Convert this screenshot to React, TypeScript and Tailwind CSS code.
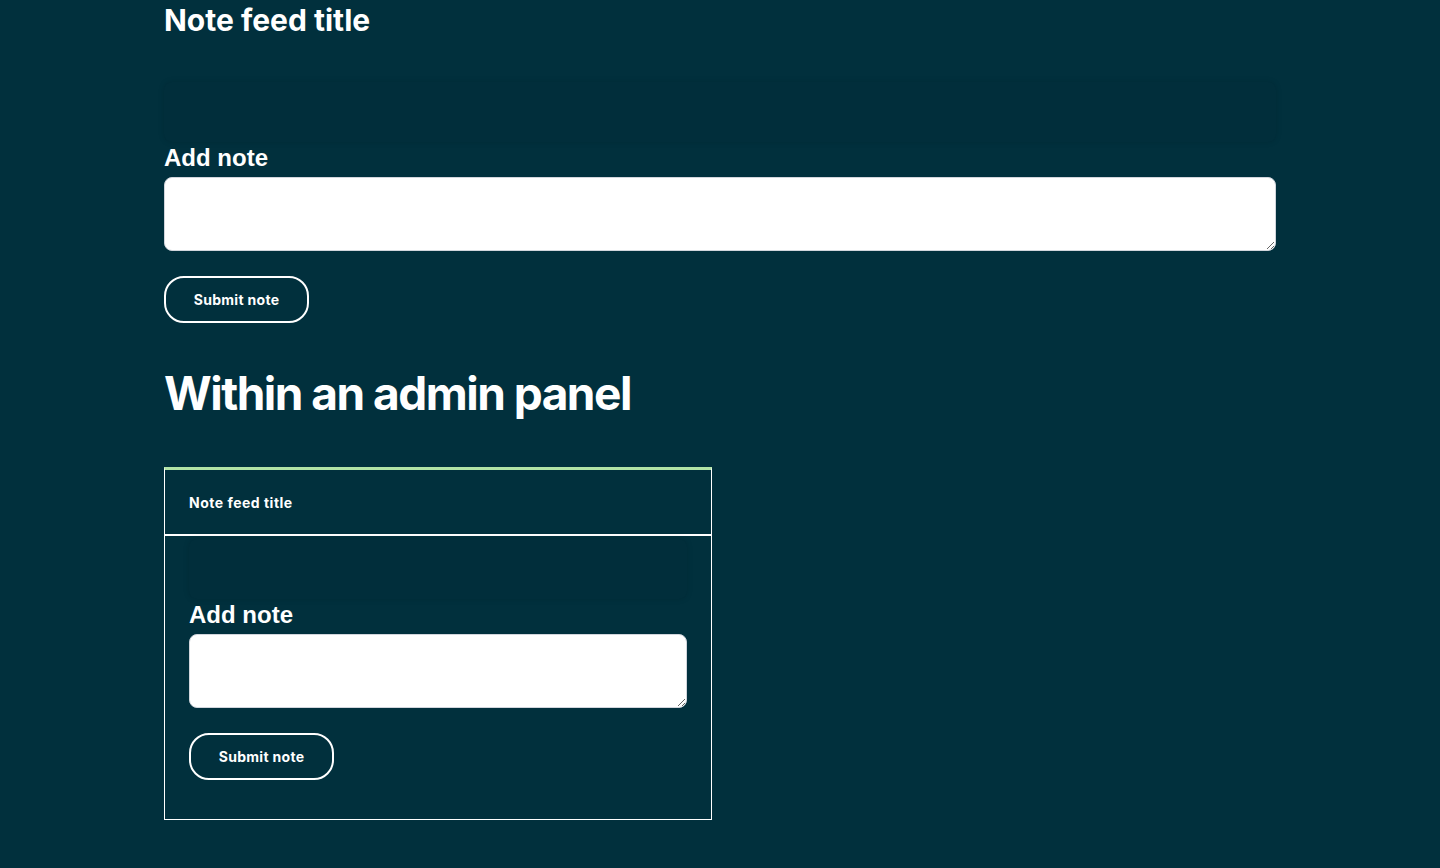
import React from "react";

const geo = { fontFamily: "Inter, 'Noto Sans', sans-serif" } as const;
const arial = { fontFamily: "'Liberation Sans', Arial, sans-serif" } as const;

function NoteForm({ inPanel }: { inPanel?: boolean }) {
  return (
    <div className="flex flex-col">
      <div className="h-[60px] rounded-lg bg-[#012e3b] shadow-[0_0_6px_rgba(0,0,0,0.12)]" />
      <label
        style={arial}
        className="mt-[1px] text-[24px] font-bold leading-[30px] text-white"
      >
        Add note
      </label>
      <textarea className="mt-[4px] h-[74px] w-full resize-y rounded-lg border border-gray-300 bg-white" />
      <div className="mt-[25px]">
        <button
          style={geo}
          className="h-[47px] w-[145px] rounded-[20px] border-2 border-white text-[14px] font-bold tracking-[0.3px] text-white"
        >
          Submit note
        </button>
      </div>
      {inPanel ? <div className="h-[15px]" /> : null}
    </div>
  );
}

export default function App() {
  return (
    <div className="min-h-[868px] w-full bg-[#01303d] text-white">
      <div className="mx-auto w-[1112px]">
        <h2
          style={geo}
          className="pt-[2px] text-[30px] font-bold leading-[36px] tracking-[0px]"
        >
          Note feed title
        </h2>
        <div className="mt-[44px]">
          <NoteForm />
        </div>
        <h2
          style={geo}
          className="mt-[42px] text-[46px] font-bold leading-[56px] tracking-[-1.5px]"
        >
          Within an admin panel
        </h2>
        <div className="mt-[46px] w-[548px] border border-t-[3px] border-white border-t-[#b2e4a6]">
          <div className="flex h-[66px] items-center border-b-2 border-white px-6">
            <span style={geo} className="text-[14px] font-bold tracking-[0.5px]">
              Note feed title
            </span>
          </div>
          <div className="px-6 pb-[24px] pt-[3px]">
            <NoteForm inPanel />
          </div>
        </div>
      </div>
    </div>
  );
}
